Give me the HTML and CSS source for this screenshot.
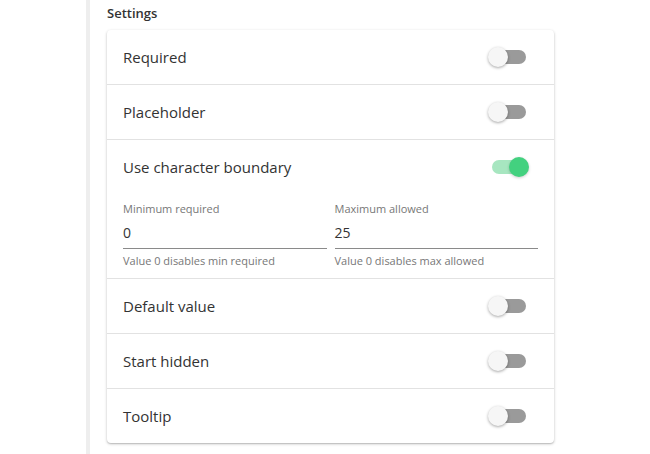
FILE: index.html
```html
<!DOCTYPE html>
<html>
<head>
<meta charset="utf-8">
<link rel="stylesheet" href="styles.css">
</head>
<body>
<div class="page">
  <div class="rail"></div>
  <main class="panel">
    <h2 class="heading">Settings</h2>
    <section class="card">
      <div class="row">
        <span class="row-label">Required</span>
        <span class="switch"><span class="thumb"></span></span>
      </div>
      <div class="row">
        <span class="row-label">Placeholder</span>
        <span class="switch"><span class="thumb"></span></span>
      </div>
      <div class="group">
        <div class="row row-plain">
          <span class="row-label">Use character boundary</span>
          <span class="switch on"><span class="thumb"></span></span>
        </div>
        <div class="fields">
          <div class="field">
            <div class="field-label">Minimum required</div>
            <div class="field-value">0</div>
            <div class="field-help">Value 0 disables min required</div>
          </div>
          <div class="field">
            <div class="field-label">Maximum allowed</div>
            <div class="field-value">25</div>
            <div class="field-help">Value 0 disables max allowed</div>
          </div>
        </div>
      </div>
      <div class="row">
        <span class="row-label">Default value</span>
        <span class="switch"><span class="thumb"></span></span>
      </div>
      <div class="row">
        <span class="row-label">Start hidden</span>
        <span class="switch"><span class="thumb"></span></span>
      </div>
      <div class="row row-last">
        <span class="row-label">Tooltip</span>
        <span class="switch"><span class="thumb"></span></span>
      </div>
    </section>
  </main>
</div>
</body>
</html>
```
FILE: styles.css
```css
html, body {
  margin: 0;
  padding: 0;
  background: #ffffff;
}
body {
  font-family: "Open Sans", "Liberation Sans", sans-serif;
  color: #333333;
}
.page {
  display: flex;
  height: 454px;
  overflow: hidden;
}
.rail {
  width: 4px;
  margin-left: 86px;
  background: #eeeeee;
  flex: none;
}
.panel {
  padding-left: 17px;
  width: 447px;
}
.heading {
  margin: 0;
  padding-top: 5px;
  height: 30px;
  box-sizing: border-box;
  font-size: 13px;
  line-height: 16px;
  font-weight: 600;
  color: #333333;
}
.card {
  background: #ffffff;
  border-radius: 4px;
  box-shadow: 0 1px 3px rgba(0, 0, 0, 0.24), 0 1px 1px rgba(0, 0, 0, 0.1);
}
.row {
  height: 54px;
  display: flex;
  align-items: center;
  justify-content: space-between;
  padding: 0 28px 0 16px;
  border-bottom: 1px solid #e2e2e2;
}
.row-plain {
  border-bottom: none;
}
.row-last {
  border-bottom: none;
}
.group {
  border-bottom: 1px solid #e2e2e2;
}
.row-label {
  font-size: 15px;
  color: #333333;
}
.switch {
  position: relative;
  width: 34px;
  height: 14px;
  border-radius: 7px;
  background: #9a9a9a;
}
.switch .thumb {
  position: absolute;
  top: -3px;
  left: -4px;
  width: 20px;
  height: 20px;
  border-radius: 50%;
  background: #f6f6f6;
  box-shadow: 0 1px 3px rgba(0, 0, 0, 0.35);
}
.switch.on {
  background: #a7e6c0;
}
.switch.on .thumb {
  left: 17px;
  background: #43d17f;
  box-shadow: 0 1px 3px rgba(0, 0, 0, 0.2);
}
.fields {
  display: flex;
  gap: 8px;
  padding: 7px 16px 10px;
}
.field {
  flex: 1;
}
.field-label {
  font-size: 11px;
  line-height: 16px;
  color: #777777;
  margin-bottom: 6px;
}
.field-value {
  font-size: 14px;
  line-height: 20px;
  padding-bottom: 5px;
  border-bottom: 1px solid #8a8a8a;
  color: #333333;
}
.field-help {
  margin-top: 5px;
  font-size: 11px;
  line-height: 14px;
  color: #777777;
}
```
